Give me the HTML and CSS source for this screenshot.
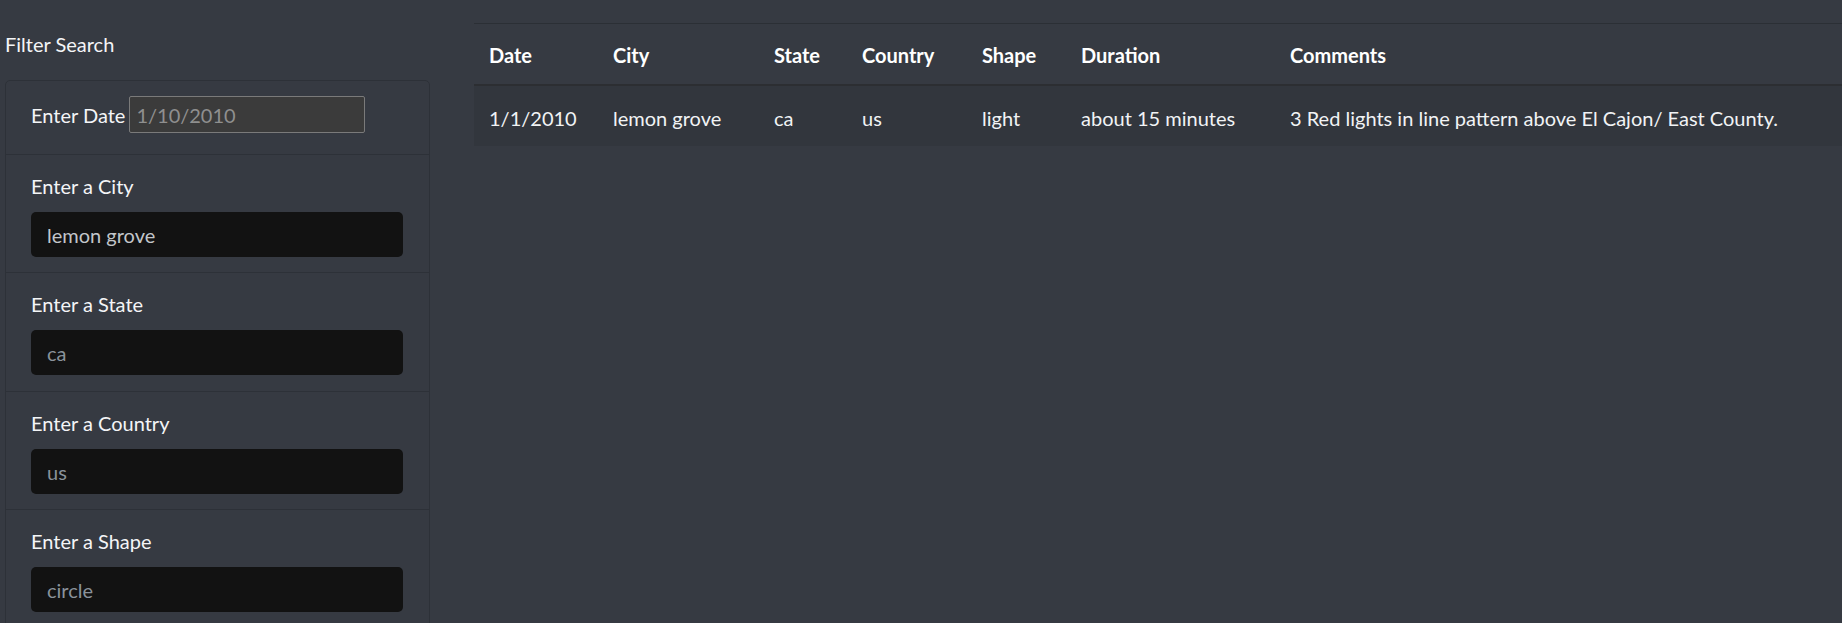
FILE: index.html
```html
<!DOCTYPE html>
<html lang="en">
<head>
<meta charset="utf-8">
<title>UFO Sightings</title>
<link rel="stylesheet" href="styles.css">
</head>
<body>
<div class="page">
  <aside class="sidebar">
    <div class="filter-title">Filter Search</div>
    <ul class="filters">
      <li class="filter filter-inline">
        <label class="inline-label" for="datetime">Enter Date</label>
        <input class="date-input" id="datetime" type="text" placeholder="1/10/2010">
      </li>
      <li class="filter">
        <label class="filter-label" for="city">Enter a City</label>
        <input class="text-input value" id="city" type="text" value="lemon grove">
      </li>
      <li class="filter">
        <label class="filter-label" for="state">Enter a State</label>
        <input class="text-input" id="state" type="text" placeholder="ca">
      </li>
      <li class="filter">
        <label class="filter-label" for="country">Enter a Country</label>
        <input class="text-input" id="country" type="text" placeholder="us">
      </li>
      <li class="filter">
        <label class="filter-label" for="shape">Enter a Shape</label>
        <input class="text-input" id="shape" type="text" placeholder="circle">
      </li>
    </ul>
  </aside>
  <main class="results">
    <table class="ufo-table">
      <thead>
        <tr>
          <th class="c-date">Date</th>
          <th class="c-city">City</th>
          <th class="c-state">State</th>
          <th class="c-country">Country</th>
          <th class="c-shape">Shape</th>
          <th class="c-duration">Duration</th>
          <th class="c-comments">Comments</th>
        </tr>
      </thead>
      <tbody>
        <tr>
          <td>1/1/2010</td>
          <td>lemon grove</td>
          <td>ca</td>
          <td>us</td>
          <td>light</td>
          <td>about 15 minutes</td>
          <td>3 Red lights in line pattern above El Cajon/ East County.</td>
        </tr>
      </tbody>
    </table>
  </main>
</div>
</body>
</html>
```

FILE: styles.css
```css
* { box-sizing: border-box; }

html, body {
  margin: 0;
  padding: 0;
  background: #363a42;
  color: #ffffff;
  font-family: Lato, "Noto Sans", "Liberation Sans", sans-serif;
  font-size: 20px;
  line-height: 30px;
  overflow: hidden;
}

.page {
  display: flex;
  align-items: flex-start;
  height: 623px;
}

.sidebar {
  flex: 0 0 430px;
  padding: 29px 0 0 5px;
}

.filter-title {
  height: 30px;
  margin-bottom: 21px;
  color: #f4f5f7;
}

.filters {
  list-style: none;
  margin: 0;
  padding: 0;
  border: 1px solid #2d3138;
  border-radius: 5px;
  width: 425px;
}

.filter {
  display: flex;
  flex-direction: column;
  align-items: flex-start;
  padding: 16px 25px 15.5px;
  border-top: 1px solid #2d3138;
}

.filter:first-child {
  border-top: none;
}

.filter-inline {
  flex-direction: row;
  align-items: baseline;
  gap: 4px;
  padding-top: 15px;
  padding-bottom: 20.5px;
}

.inline-label,
.filter-label {
  color: #f4f5f7;
  line-height: 30px;
}

.filter-label {
  margin-bottom: 11px;
}

.date-input {
  width: 236px;
  height: 37px;
  padding: 0 6px;
  background: #3b3b3b;
  border: 1px solid #7a7a7a;
  border-radius: 2px;
  font: inherit;
  color: #8f8f8f;
}

.date-input::placeholder { color: #8f8f8f; }

.text-input {
  width: 372px;
  height: 45px;
  padding: 1px 16px 0;
  background: #121212;
  border: none;
  border-radius: 5px;
  font: inherit;
  color: #c2c6ca;
  outline: none;
}

.text-input::placeholder { color: #8a929b; }

.results {
  flex: 1 1 auto;
  padding: 23px 0 0 44px;
  min-width: 0;
}

.ufo-table {
  width: 100%;
  border-collapse: collapse;
  table-layout: fixed;
}

.ufo-table th,
.ufo-table td {
  text-align: left;
  vertical-align: top;
  white-space: nowrap;
  line-height: 30px;
}

.ufo-table th {
  padding: 16px 15px 14px;
  font-weight: 700;
  color: #ffffff;
  background: #363a42;
}

.ufo-table td {
  padding: 17px 15px 13px;
  background: #32363d;
  color: #f1f3f5;
}

.ufo-table thead tr {
  border-top: 1px solid #2b2f35;
  border-bottom: 2px solid #2c2e32;
}

.c-date { width: 124px; }
.c-city { width: 161px; }
.c-state { width: 88px; }
.c-country { width: 120px; }
.c-shape { width: 99px; }
.c-duration { width: 209px; }
```
